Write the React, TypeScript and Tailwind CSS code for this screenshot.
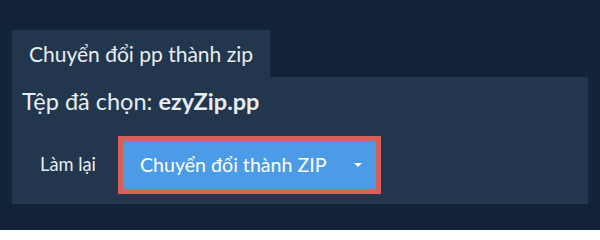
import React from 'react';

const font = { fontFamily: 'Lato, "Noto Sans", sans-serif' };

function Caret() {
  return (
    <svg width="8" height="4" viewBox="0 0 8 4" className="ml-auto">
      <path d="M0 0 L8 0 L4 4 Z" fill="#ffffff" />
    </svg>
  );
}

export default function App() {
  return (
    <div className="w-[600px] h-[230px] bg-[#12233a] pt-[30px] px-[12px] text-[#e8edf2] antialiased" style={font}>
      <div className="inline-flex items-center h-[47px] px-[17px] bg-[#22374d] text-[21px]">
        Chuyển đổi pp thành zip
      </div>
      <div className="w-[576px] h-[127px] bg-[#22374d] flex flex-col">
        <div className="h-[50px] flex items-center pl-[10px] text-[23.5px]">
          <span>Tệp đã chọn:&nbsp;</span>
          <span className="font-bold">ezyZip.pp</span>
        </div>
        <div className="flex items-center mt-[9px] pl-[28px]">
          <button className="text-[18.3px] text-[#e8edf2] mr-[22px]">Làm lại</button>
          <button className="flex items-center w-[263px] h-[58px] border-[5px] border-[#d9605a] bg-[#4b9be6] pl-[17px] pr-[14px] text-[19.6px] text-white">
            <span>Chuyển đổi thành ZIP</span>
            <Caret />
          </button>
        </div>
      </div>
    </div>
  );
}
